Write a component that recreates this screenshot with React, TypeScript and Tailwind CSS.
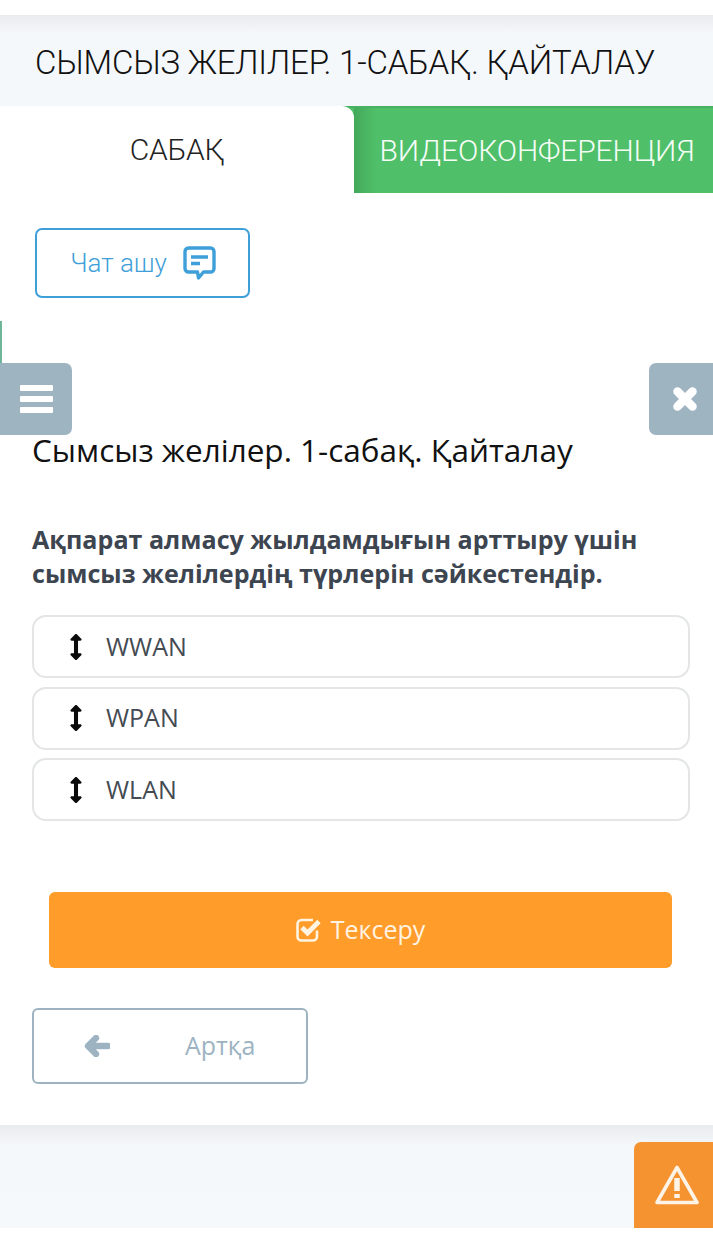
import React from "react";
import { FaArrowsAltV } from "react-icons/fa";

function ChatIcon() {
  return (
    <svg width="33" height="34" viewBox="0 0 33 34" fill="none" className="text-[#3f9fd9]">
      <path d="M5.5 2H27.5A3.5 3.5 0 0 1 31 5.5V22.5A3.5 3.5 0 0 1 27.5 26H20.5L15.5 32L14.5 26H5.5A3.5 3.5 0 0 1 2 22.5V5.5A3.5 3.5 0 0 1 5.5 2Z" stroke="currentColor" strokeWidth="3.4" strokeLinejoin="round" />
      <path d="M8 11H25M8 17.5H17" stroke="currentColor" strokeWidth="3.4" />
    </svg>
  );
}

function WarnIcon() {
  return (
    <svg width="44" height="40" viewBox="0 0 44 40" fill="none">
      <path d="M22 2.5L42 37.5H2Z" stroke="#fdf3e6" strokeWidth="3.6" strokeLinejoin="round" />
      <path d="M22 13V26" stroke="#fdf3e6" strokeWidth="5.5" />
      <path d="M22 29V33" stroke="#fdf3e6" strokeWidth="5.5" />
    </svg>
  );
}

function CheckBoxIcon() {
  return (
    <svg width="26" height="24" viewBox="0 0 26 24" fill="none">
      <path d="M21 12.5V18.5A4 4 0 0 1 17 22.5H5.5A4 4 0 0 1 1.5 18.5V6A4 4 0 0 1 5.5 2H17" stroke="#fff3e2" strokeWidth="2.6" />
      <path d="M6 9.5L11.5 15L23 3.5" stroke="#fff3e2" strokeWidth="4.8" />
    </svg>
  );
}

function BackArrow() {
  return (
    <svg width="26" height="22" viewBox="0 0 26 22" fill="none">
      <path d="M12 3L4 11L12 19M5 11H24" stroke="#9db3c2" strokeWidth="6.4" strokeLinecap="round" strokeLinejoin="round" />
    </svg>
  );
}

function BarsIcon() {
  return (
    <svg width="33" height="28" viewBox="0 0 33 28" fill="white">
      <rect x="0" y="0" width="33" height="6" rx="1" />
      <rect x="0" y="11" width="33" height="6" rx="1" />
      <rect x="0" y="22" width="33" height="6" rx="1" />
    </svg>
  );
}

function CloseIcon() {
  return (
    <svg width="26" height="26" viewBox="0 0 26 26" fill="none">
      <path d="M5.5 5.5L20.5 20.5M20.5 5.5L5.5 20.5" stroke="white" strokeWidth="8.5" strokeLinecap="round" />
    </svg>
  );
}

const items = ["WWAN", "WPAN", "WLAN"];

export default function App() {
  return (
    <div className="relative flex h-[1238px] w-[713px] flex-col overflow-hidden bg-white font-['Open_Sans',sans-serif]">
      <div className="h-[15px] shrink-0" />
      <header className="flex h-[91px] shrink-0 items-center bg-gradient-to-b from-[#e9ebee] via-[#f5f8fb] via-20% to-[#f5f8fb] pt-[4px] pl-[35px]">
        <h1 className="font-['Roboto',sans-serif] text-[33px] font-light tracking-[-0.2px] whitespace-nowrap text-[#111111]">
          СЫМСЫЗ ЖЕЛІЛЕР. 1-САБАҚ. ҚАЙТАЛАУ
        </h1>
      </header>

      <nav className="flex h-[87px] shrink-0 border-t-2 border-[#47b25f] bg-[#50bf69] font-['Roboto',sans-serif] font-light">
        <div className="-mt-[2px] flex h-[87px] w-[354px] items-center justify-center rounded-tr-[12px] bg-white text-[30px] tracking-[-0.3px] text-[#222222]">
          САБАҚ
        </div>
        <div className="flex flex-1 items-center justify-center bg-gradient-to-r from-[#43a95a] via-[#50bf69] via-[6%] to-[#50bf69] pl-[7px] text-[30px] tracking-[-0.1px] whitespace-nowrap text-[#f6fdf7]">
          ВИДЕОКОНФЕРЕНЦИЯ
        </div>
      </nav>

      <main className="flex flex-1 flex-col px-[32px]">
        <button className="mt-[35px] ml-[3px] flex h-[70px] w-[215px] items-center justify-center gap-[16px] rounded-[7px] border-2 border-[#3f9fd9] pl-[1px] font-['Roboto',sans-serif] text-[26px] font-light tracking-[0px] text-[#3f9fd9]">
          <span>Чат ашу</span>
          <ChatIcon />
        </button>

        <h2 className="mt-[127px] text-[31.5px] leading-[50px] whitespace-nowrap text-[#111111]">
          Сымсыз желілер. 1-сабақ. Қайталау
        </h2>

        <p className="mt-[47px] w-[650px] text-[25.1px] leading-[34px] font-bold text-[#3d4550]">
          Ақпарат алмасу жылдамдығын арттыру үшін сымсыз желілердің түрлерін сәйкестендір.
        </p>

        <ul className="mt-[25px] flex w-[658px] flex-col gap-[8.5px]">
          {items.map((t) => (
            <li key={t} className="flex h-[63px] items-center rounded-[14px] border-2 border-[#e3e5e6] pl-[32px] text-[25px] text-[#444b52]">
              <FaArrowsAltV className="w-[20px] text-[26px] text-[#0b0b0b]" />
              <span className="ml-[20px]">{t}</span>
            </li>
          ))}
        </ul>

        <button className="mt-[71px] ml-[17px] flex h-[76px] w-[623px] shrink-0 items-center justify-center gap-[9px] rounded-[6px] bg-[#ff9c2a] text-[25px] text-[#fff3e2]">
          <CheckBoxIcon />
          <span>Тексеру</span>
        </button>

        <button className="mt-[40px] flex h-[76px] w-[276px] shrink-0 items-center rounded-[6px] border-2 border-[#9db3c2] pl-[50px] text-[25px] text-[#9db3c2]">
          <BackArrow />
          <span className="ml-[75px]">Артқа</span>
        </button>
      </main>

      <footer className="h-[103px] shrink-0 bg-gradient-to-b from-[#e9ebee] via-[#f5f8fb] via-20% to-[#f6f9fb]" />
      <div className="h-[10px] shrink-0" />

      <div className="absolute top-[321px] left-0 h-[69px] w-[2px] bg-[#6fb59a]" />
      <div className="absolute top-[363px] left-0 flex h-[72px] w-[72px] items-center justify-center rounded-r-[7px] bg-[#9fb4c1] pb-[1px]">
        <BarsIcon />
      </div>
      <div className="absolute top-[363px] right-0 flex h-[72px] w-[64px] items-center justify-center rounded-l-[7px] bg-[#9fb4c1] pl-[7px]">
        <CloseIcon />
      </div>
      <div className="absolute top-[1142px] right-0 flex h-[86px] w-[79px] items-center justify-center rounded-tl-[7px] bg-[#f59331] pl-[7px]">
        <WarnIcon />
      </div>
    </div>
  );
}
